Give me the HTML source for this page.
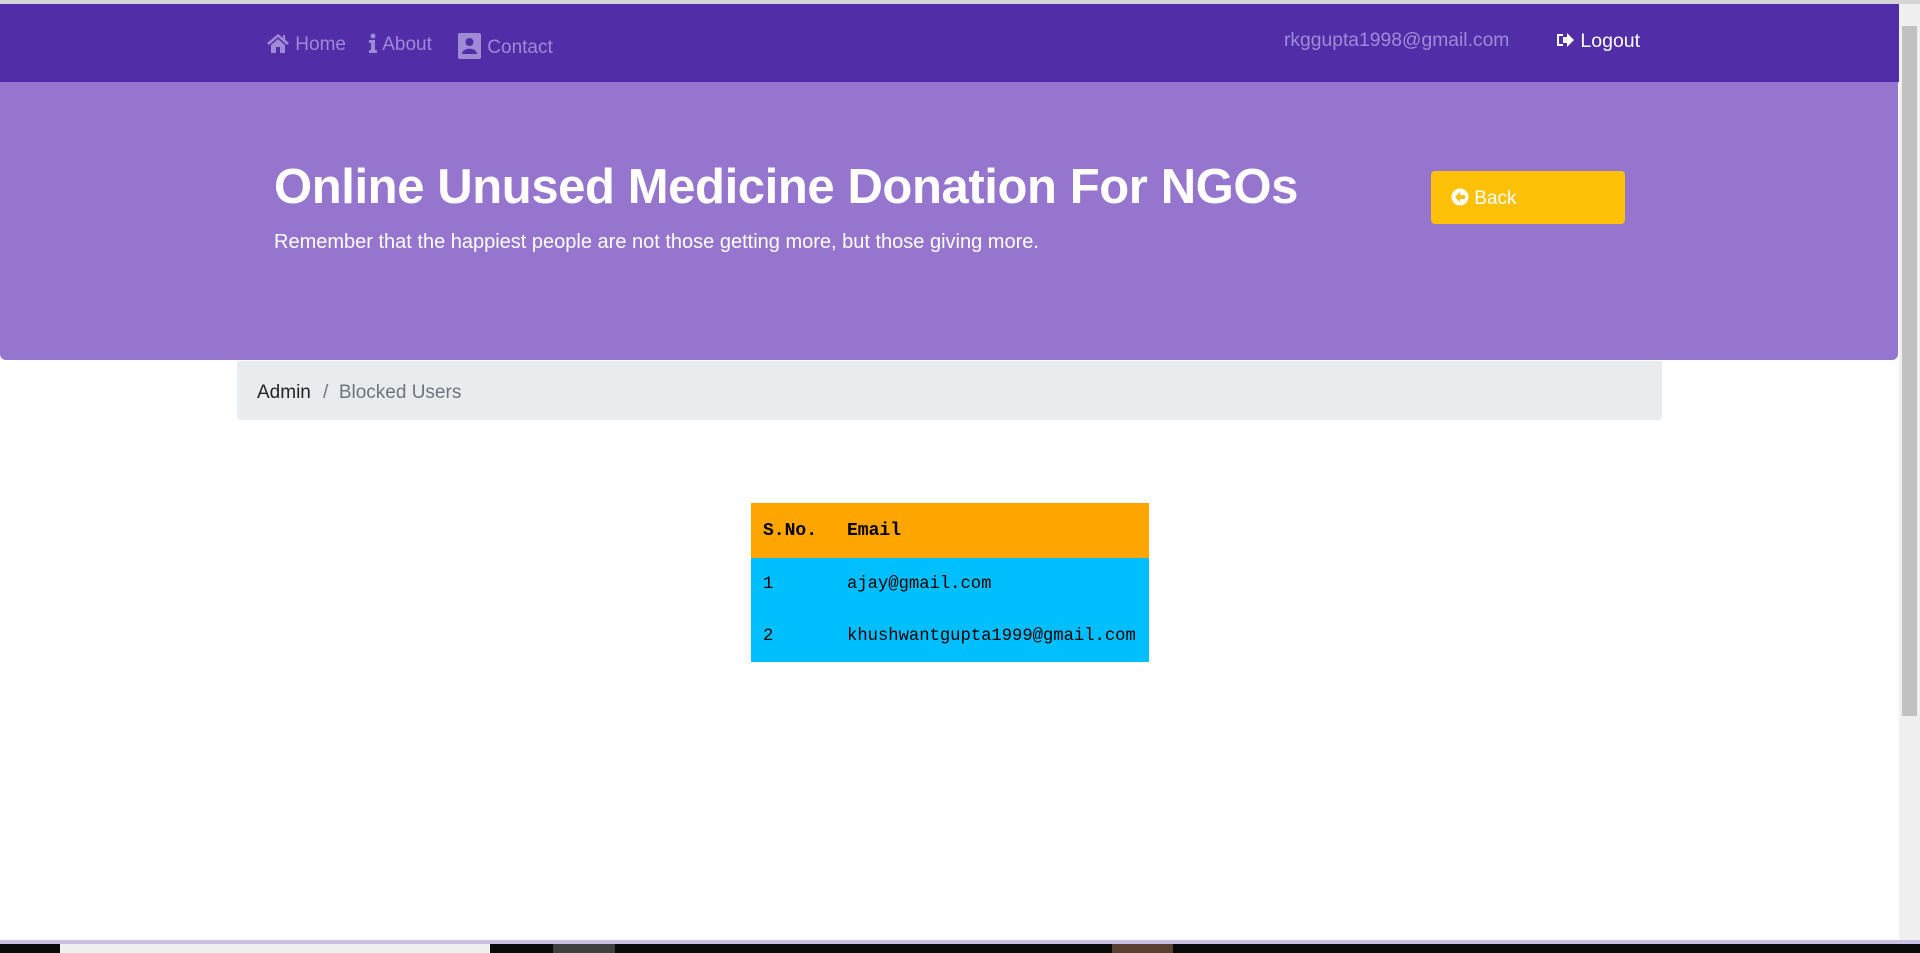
<!DOCTYPE html>
<html><head><meta charset="utf-8"><style>
*{margin:0;padding:0;box-sizing:border-box}
body{width:1920px;height:953px;overflow:hidden;background:#fff;font-family:"Liberation Sans",sans-serif;position:relative}
.abs{position:absolute}
.nav{left:0;top:4px;width:1899px;height:78px;background:#512da8}
.top{left:0;top:0;width:1920px;height:4px;background:#d4d4d4}
.navl{color:#9f8ad6;font-size:19px;top:33px}
.jum{left:0;top:82px;width:1898px;height:278px;background:#9575cd;border-radius:0 0 6px 6px}
h1{position:absolute;left:274px;top:159px;color:#fff;font-size:49px;font-weight:bold;white-space:nowrap;letter-spacing:-0.4px}
.sub{left:274px;top:231px;color:#fff;font-size:20px;white-space:nowrap}
.back{left:1431px;top:171px;width:194px;height:53px;background:#ffc107;border-radius:4px;color:#fff;font-size:19px}
.bc{left:237px;top:361px;width:1425px;height:59px;background:#e9ecef;border-radius:0 0 4px 4px;font-size:19px}
table{position:absolute;left:751px;top:503px;width:398px;border-collapse:collapse;font-family:"Liberation Mono",monospace;font-size:17.2px}
th{background:#ffa500;height:55px;text-align:left;padding-left:12px;font-size:18px}
td{background:#00bfff;height:52px;padding-left:12px}
.sb{left:1899px;top:4px;width:21px;height:936px;background:#f0f0f0}
</style></head><body>
<div class="abs top"></div>
<div class="abs nav"></div>
<div class="abs navl" style="left:266px"><svg width="24" height="20" viewBox="0 0 24 20" style="vertical-align:-3px"><path d="M12 1 L1 10 L3 12 L12 4 L21 12 L23 10 L19 6.5 V2 H17 V5 Z M5 12 V20 H10 V14 H14 V20 H19 V12 L12 6 Z" fill="#9f8ad6"/></svg> Home</div>
<div class="abs navl" style="left:368px"><svg width="10" height="20" viewBox="0 0 10 20" style="vertical-align:-3px"><circle cx="5" cy="3" r="2.5" fill="#9f8ad6"/><path d="M1 7 H7 V17 H9 V20 H1 V17 H3 V10 H1 Z" fill="#9f8ad6"/></svg> About</div>
<div class="abs navl" style="left:458px"><svg width="24" height="26" viewBox="0 0 24 26" style="vertical-align:-6px"><rect x="0" y="0" width="23" height="26" rx="2" fill="#9f8ad6"/><circle cx="11.5" cy="9" r="4" fill="#512da8"/><path d="M4 21 C4 14 19 14 19 21 Z" fill="#512da8"/></svg> Contact</div>
<div class="abs" style="left:1284px;top:30px;color:#9f8ad6;font-size:19.3px">rkggupta1998@gmail.com</div>
<div class="abs" style="left:1556px;top:30px;color:#fff;font-size:19.5px"><svg width="19" height="16" viewBox="0 0 19 16" style="vertical-align:-1px"><path d="M1 2 H7 V4 H3 V12 H7 V14 H1 Z" fill="#fff"/><path d="M7 5 H11 V1 L18 8 L11 15 V11 H7 Z" fill="#fff"/></svg> Logout</div>
<div class="abs jum"></div>
<h1>Online Unused Medicine Donation For NGOs</h1>
<div class="abs sub">Remember that the happiest people are not those getting more, but those giving more.</div>
<div class="abs back"><div style="position:absolute;left:20px;top:17px"><svg width="18" height="18" viewBox="0 0 18 18" style="vertical-align:-2px"><circle cx="9" cy="9" r="8.5" fill="#fff"/><path d="M4 9 L9 4 V7 H14 V11 H9 V14 Z" fill="#ffc107"/></svg> Back</div></div>
<div class="abs bc"><span style="position:absolute;left:20px;top:21px;color:#212529">Admin</span><span style="position:absolute;left:86px;top:21px;color:#6c757d">/&nbsp;&nbsp;Blocked Users</span></div>
<table><tr><th>S.No.</th><th style="padding-left:0">Email</th></tr>
<tr><td style="width:96px">1</td><td style="padding-left:0">ajay@gmail.com</td></tr>
<tr><td>2</td><td style="padding-left:0">khushwantgupta1999@gmail.com</td></tr></table>
<div class="abs sb"><div style="position:absolute;left:3px;top:22px;width:15px;height:690px;background:#c1c1c1"></div></div>
<div class="abs" style="left:0;top:940px;width:1920px;height:4px;background:#cbbfe6"></div>
<div class="abs" style="left:0;top:944px;width:1920px;height:9px;background:#0a0a0a"></div>
<div class="abs" style="left:60px;top:944px;width:430px;height:9px;background:#f0f0f0"></div>
<div class="abs" style="left:553px;top:944px;width:62px;height:9px;background:#404040"></div>
<div class="abs" style="left:1112px;top:944px;width:61px;height:9px;background:#5a4030"></div>
</body></html>
